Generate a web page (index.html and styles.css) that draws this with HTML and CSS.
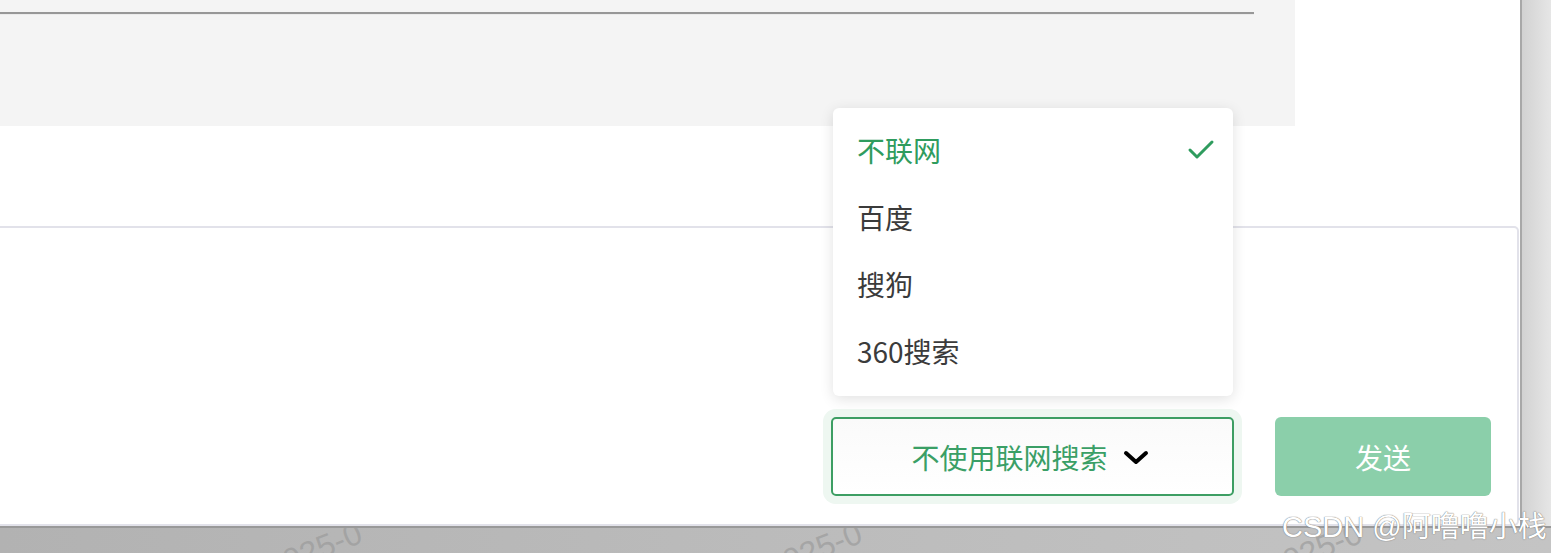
FILE: index.html
```html
<!DOCTYPE html>
<html lang="zh-CN">
<head>
<meta charset="utf-8">
<title>联网搜索选择</title>
<link rel="stylesheet" href="styles.css">
</head>
<body>
<div class="screen">
  <div class="window">
    <div class="main">
      <div class="top">
        <div class="history">
          <div class="rule"></div>
        </div>
      </div>
      <div class="composer">
        <div class="select-wrap">
          <div class="menu">
            <div class="item active"><span>不联网</span>
              <svg class="check" width="28" height="22" viewBox="0 0 28 22"><polyline points="3,11 10,18 25,3" fill="none" stroke="#2f9c5e" stroke-width="3" stroke-linecap="round" stroke-linejoin="round"/></svg>
            </div>
            <div class="item"><span>百度</span></div>
            <div class="item"><span>搜狗</span></div>
            <div class="item"><span>360搜索</span></div>
          </div>
          <div class="select">
            <span>不使用联网搜索</span>
            <svg class="chev" width="28" height="16" viewBox="0 0 28 16"><polyline points="4,3 14,12 24,3" fill="none" stroke="#000" stroke-width="4" stroke-linecap="round" stroke-linejoin="round"/></svg>
          </div>
        </div>
        <button class="send">发送</button>
      </div>
    </div>
    <div class="edge"></div>
  </div>
  <div class="desk">
    <span class="wm wm1">2025-0</span>
    <span class="wm wm2">2025-0</span>
    <span class="wm wm3">2025-0</span>
  </div>
  <div class="csdn">CSDN @阿噜噜小栈</div>
</div>
</body>
</html>
```

FILE: styles.css
```css
html, body {
  margin: 0;
  padding: 0;
  background: #ffffff;
  overflow: hidden;
}
body {
  font-family: "Noto Sans CJK SC", "Noto Sans", sans-serif;
}
.screen {
  position: relative;
  width: 1551px;
  height: 553px;
  display: flex;
  flex-direction: column;
  overflow: hidden;
}
.window {
  display: flex;
  height: 526px;
}
.main {
  width: 1520px;
  border-right: 2px solid #a8a8a8;
  background: #ffffff;
  display: flex;
  flex-direction: column;
}
.top {
  height: 226px;
  display: flex;
}
.history {
  width: 1295px;
  height: 126px;
  background: #f4f4f4;
  padding-top: 12px;
  box-sizing: border-box;
}
.rule {
  width: 1254px;
  height: 2px;
  background: #979797;
  border-bottom: 1px solid #ebebeb;
}
.composer {
  flex: 1;
  margin-right: 1px;
  border: 2px solid #e2e2ea;
  border-left: none;
  border-radius: 0 5px 5px 0;
  display: flex;
  justify-content: flex-end;
  align-items: flex-end;
  gap: 41px;
  padding: 0 26px 28px 0;
}
.select-wrap {
  position: relative;
}
.select {
  width: 403px;
  height: 79px;
  box-sizing: border-box;
  border: 2px solid #3d9e63;
  border-radius: 5px;
  background: linear-gradient(#fafafa, #ffffff);
  box-shadow: 0 0 0 8px #eef7f1;
  display: flex;
  align-items: center;
  justify-content: center;
  gap: 14px;
  color: #3a9f66;
  font-size: 28px;
  padding-right: 4px;
}
.chev {
  margin-top: 2px;
}
.menu {
  position: absolute;
  left: 2px;
  bottom: calc(100% + 21px);
  width: 400px;
  background: #ffffff;
  border-radius: 6px;
  box-shadow: 0 3px 14px rgba(0, 0, 0, 0.12);
  padding: 8px 0 12px;
}
.item {
  height: 67px;
  display: flex;
  align-items: center;
  justify-content: space-between;
  padding: 0 18px 0 24px;
  font-size: 28px;
  color: #3b3b3b;
}
.item.active {
  color: #2f9c5e;
}
.send {
  width: 216px;
  height: 79px;
  border: none;
  border-radius: 6px;
  background: #8bcfaa;
  color: #ffffff;
  font-family: "Noto Sans CJK SC", sans-serif;
  font-size: 28px;
  padding: 0;
}
.edge {
  flex: 1;
  background: linear-gradient(90deg, #d2d2d2, #e6e6e6);
}
.desk {
  position: relative;
  flex: 1;
  overflow: hidden;
  border-top: 2px solid #999999;
  background: linear-gradient(90deg, #b2b2b2, #bdbdbd 60%, #c4c4c4);
}
.wm {
  position: absolute;
  top: 26px;
  font-family: "Liberation Sans", sans-serif;
  font-size: 32px;
  line-height: 32px;
  color: rgba(150, 150, 150, 0.6);
  transform: rotate(-22deg);
  transform-origin: left top;
}
.wm1 { left: 262px; }
.wm2 { left: 762px; }
.wm3 { left: 1262px; }
.csdn {
  position: absolute;
  left: 1282px;
  top: 503px;
  font-family: "Liberation Sans", "Noto Sans CJK SC", sans-serif;
  font-size: 29px;
  color: #ffffff;
  text-shadow: 0 0 1px #7a7a7a, 0 0 1px #7a7a7a;
  white-space: nowrap;
}
```
